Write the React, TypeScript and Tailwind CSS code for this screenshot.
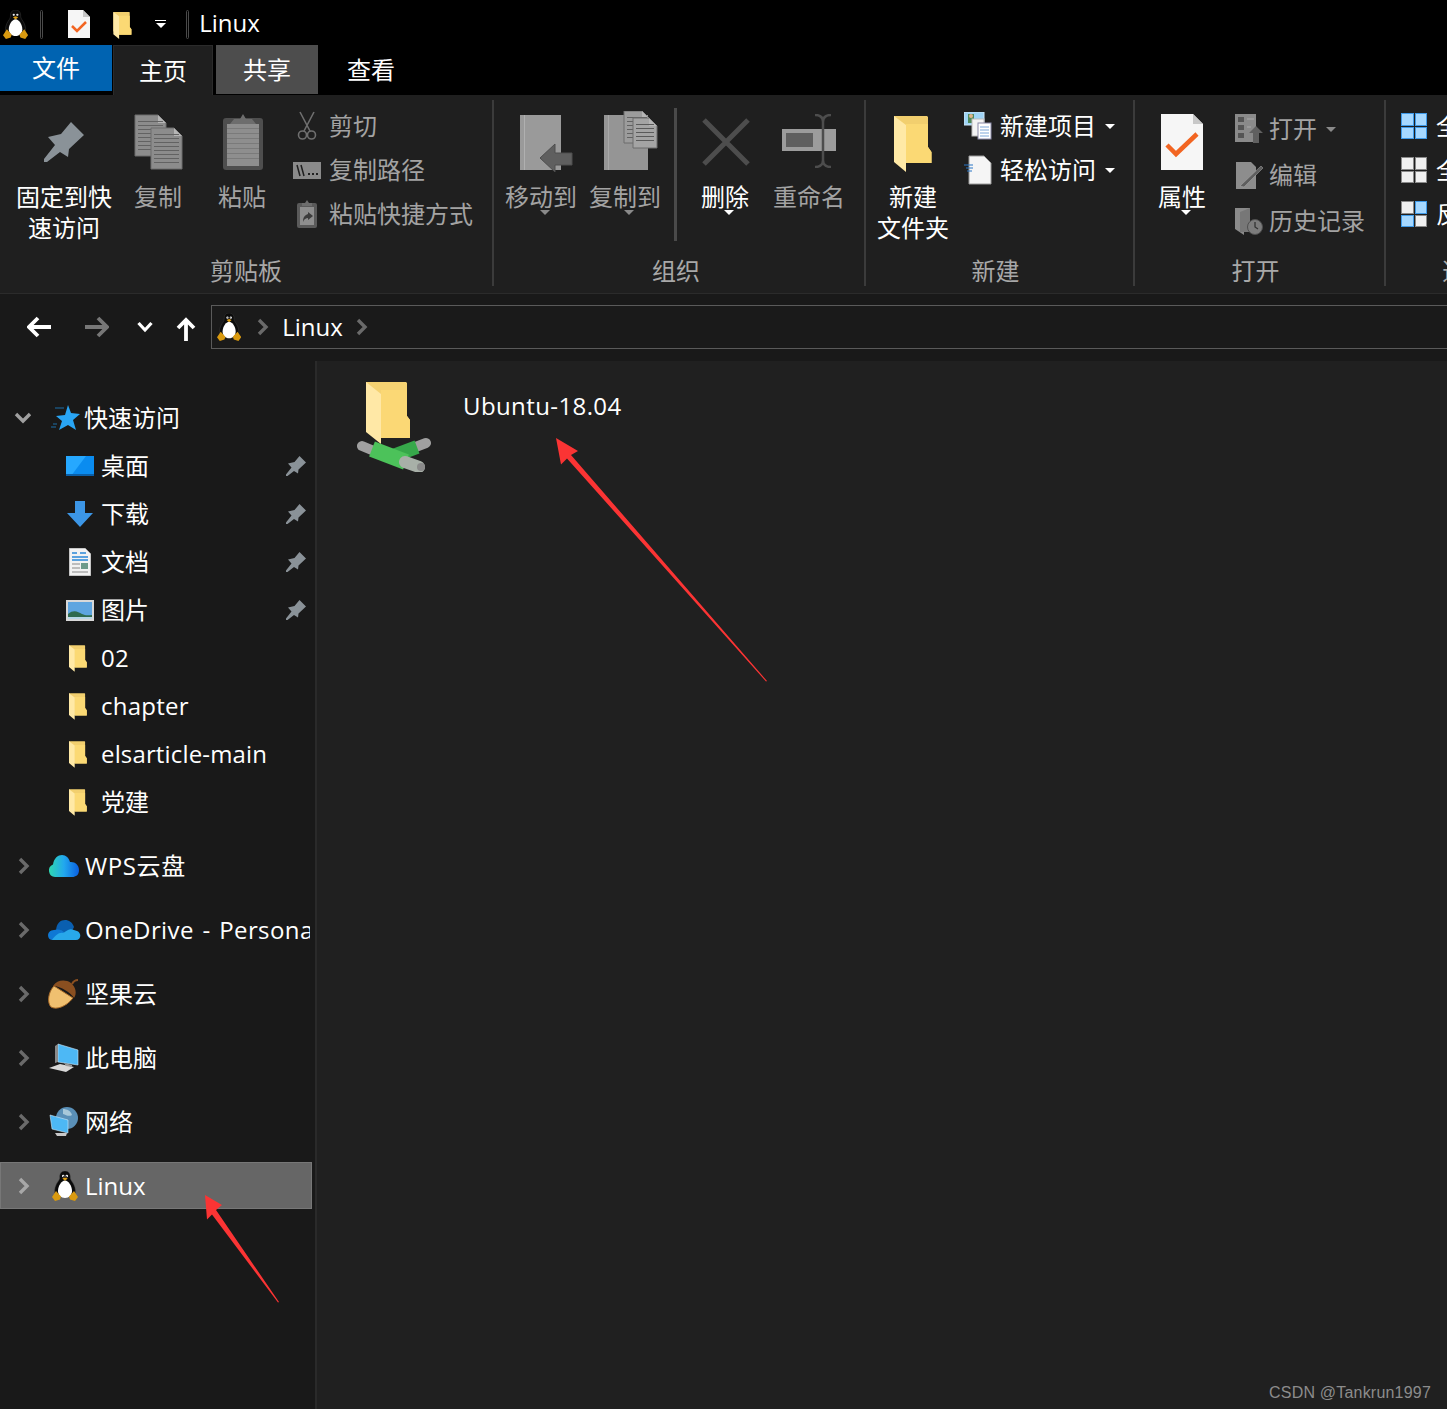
import type { ReactNode } from "react";

const Tux = ({ h = 30 }: { h?: number }) => (
  <svg width={(h * 26) / 30} height={h} viewBox="0 0 26 30">
    <path d="M13 0C9 0 7.500 3 7.700 6.500c.1 2.500-2.200 4-3.700 7.500-1.500 3.500-2 7-.5 10h19c1.500-3 1-6.500-.5-10-1.500-3.500-3.800-5-3.700-7.500C18.500 3 17 0 13 0z" fill="#0b0b0b" stroke="#4a4a4a" strokeWidth="0.4" />
    <path d="M13 9.500c-3.500 0-7 5.500-7 10.500 0 4 3 7 7 7s7-3 7-7c0-5-3.500-10.500-7-10.500z" fill="#fff" />
    <circle cx="11.200" cy="5" r="1.200" fill="#fff" />
    <circle cx="14.800" cy="5" r="1.200" fill="#fff" />
    <circle cx="11.500" cy="5.200" r="0.500" fill="#000" />
    <circle cx="14.500" cy="5.200" r="0.500" fill="#000" />
    <path d="M10.300 7.500 13 6.500l2.700 1L13 9.800z" fill="#e0a015" />
    <path d="M0 26l4-6 5 5.500-1 3-5 1.500zM26 26l-4-6-5 5.500 1 3 5 1.500z" fill="#d99a10" />
  </svg>
);

const Folder = ({ w = 20, h = 28 }: { w?: number; h?: number }) => (
  <svg width={w} height={h} viewBox="0 0 38 56">
    <path d="M0 0h33l1 1v30l3.500 5v11H12L0 40z" fill="#f2cf6e" />
    <path d="M12 8h22v23l3.500 5v11H12z" fill="#fbd974" />
    <path d="M0 0l12 9v47L0 46z" fill="#ffe9a6" />
  </svg>
);

const Pin = ({ size = 40, fill = "#8a9298" }: { size?: number; fill?: string }) => (
  <svg width={size} height={size} viewBox="0 0 40 40">
    <path d="M0 40h3l13-10 8 5 1-8 15-14L27 0 17 12 4 15l7 8L0 37z" fill={fill} />
  </svg>
);

const PageLines = ({ x, y, w, h, fill = "#8c8c8c", line = "#626262" }: { x: number; y: number; w: number; h: number; fill?: string; line?: string }) => {
  const rows = Array.from({ length: Math.floor((h - 8) / 4) }, (_, i) => y + 6 + i * 4);
  return (
    <g>
      <path d={`M${x} ${y}h${w - 8}l8 8v${h - 8}h-${w}z`} fill={fill} stroke="#6d6d6d" />
      <path d={`M${x + w - 8} ${y}v8h8z`} fill="#b5b5b5" />
      {rows.map((r) => (
        <rect key={r} x={x + 3} y={r} width={w - 6} height="1" fill={line} />
      ))}
    </g>
  );
};

const CopyIcon = () => (
  <svg width="50" height="56" viewBox="0 0 50 56">
    <PageLines x={1} y={1} w={31} h={41} />
    <PageLines x={17} y={14} w={31} h={41} />
  </svg>
);

const PasteIcon = () => (
  <svg width="42" height="58" viewBox="0 0 42 58">
    <rect x="1" y="5" width="40" height="52" rx="3" fill="#4e4e4e" />
    <rect x="5" y="11" width="32" height="42" fill="#8e8e8e" />
    {[15, 20, 25, 30, 35, 40, 45].map((r) => (
      <rect key={r} x="5" y={r} width="32" height="1" fill="#7a7a7a" />
    ))}
    <path d="M8 11l4-5h6l3-5 3 5h6l4 5z" fill="#6d6d6d" />
  </svg>
);

const Scissors = () => (
  <svg width="20" height="30" viewBox="0 0 20 30" fill="none" stroke="#6f6f6f" strokeWidth="1.600">
    <path d="M3 1l10 19M17 1L7 20" />
    <circle cx="5.500" cy="24" r="4" />
    <circle cx="14.500" cy="24" r="4" />
  </svg>
);

const PathIcon = () => (
  <svg width="28" height="17" viewBox="0 0 28 17">
    <rect width="28" height="17" fill="#8a8a8a" />
    <path d="M4 3l3 11M8 3l3 11" stroke="#1f1f1f" strokeWidth="1.500" />
    <path d="M15 11h2v2h-2zM19 11h2v2h-2zM23 11h2v2h-2z" fill="#1f1f1f" />
  </svg>
);

const ShortcutIcon = () => (
  <svg width="20" height="28" viewBox="0 0 20 28">
    <rect x="0" y="3" width="20" height="25" rx="2" fill="#5a5a5a" />
    <rect x="3" y="7" width="14" height="18" fill="#8e8e8e" />
    <path d="M5 3h3l2-3 2 3h3v3H5z" fill="#6d6d6d" />
    <path d="M6 22c0-5 2-7 5-8v-2l5 4-5 4v-2c-2 0-4 1-5 4z" fill="#3c3c3c" />
  </svg>
);

const MoveIcon = () => (
  <svg width="54" height="58" viewBox="0 0 54 58">
    <path d="M0 1h41v55H0z" fill="#9a9a9a" />
    <rect x="4" y="1" width="1" height="55" fill="#b0b0b0" />
    <path d="M20 44l15-14v9h17v12H35v7z" fill="#5f5f5f" stroke="#4e4e4e" />
  </svg>
);

const CopyToIcon = () => (
  <svg width="54" height="60" viewBox="0 0 54 60">
    <path d="M0 4h44v55H0z" fill="#959595" />
    <rect x="4" y="4" width="1" height="55" fill="#a8a8a8" />
    <PageLines x={20} y={0} w={26} h={32} fill="#9c9c9c" />
    <PageLines x={29} y={7} w={24} h={30} fill="#a4a4a4" line="#5a5a5a" />
  </svg>
);

const DeleteIcon = () => (
  <svg width="48" height="48" viewBox="0 0 48 48">
    <path d="M2 2l44 44M46 2 2 46" stroke="#4d4d4d" strokeWidth="5" />
  </svg>
);

const RenameIcon = () => (
  <svg width="56" height="54" viewBox="0 0 56 54">
    <rect x="1" y="15" width="54" height="22" fill="#9c9c9c" />
    <rect x="5" y="19" width="27" height="14" fill="#5f5f5f" />
    <path d="M34 1c5 0 8 2 8 7v38c0 5 3 7 8 7M50 1c-5 0-8 2-8 7v38c0 5-3 7-8 7" fill="none" stroke="#4d4d4d" strokeWidth="2.500" />
  </svg>
);

const PropertiesIcon = () => (
  <svg width="42" height="56" viewBox="0 0 42 56">
    <path d="M0 0h32l10 10v46H0z" fill="#f6f6f6" />
    <path d="M32 0v10h10z" fill="#c8c8c8" />
    <path d="M6 31l9 9 21-20" fill="none" stroke="#f26522" strokeWidth="4.500" />
  </svg>
);

const NewItemIcon = () => (
  <svg width="28" height="28" viewBox="0 0 28 28">
    <rect x="0" y="0" width="20" height="13" fill="#9fd4f5" stroke="#cfe7f7" />
    <rect x="4" y="2" width="6" height="9" fill="#4f8a5b" />
    <circle cx="7" cy="4" r="2" fill="#e0b48a" />
    <rect x="8" y="7" width="12" height="17" fill="#f4f4f4" stroke="#bbb" />
    <rect x="14" y="11" width="13" height="16" fill="#fff" stroke="#8a8aa8" />
    <path d="M16 15h9M16 18h9M16 21h9M16 24h9" stroke="#7da7d8" />
  </svg>
);

const EasyAccessIcon = () => (
  <svg width="28" height="30" viewBox="0 0 28 30">
    <path d="M5 1h15l7 7v21H5z" fill="#f5f5f5" stroke="#9a9a9a" />
    <path d="M0 10h9M2 13h7M3 16h5" stroke="#2a76c6" strokeWidth="1.200" />
  </svg>
);

const OpenIcon = () => (
  <svg width="28" height="30" viewBox="0 0 28 30">
    <rect x="0" y="0" width="21" height="28" fill="#8a8a8a" />
    <path d="M3 3h6v5H3zM3 11h6v5H3zM3 19h6v5H3z" fill="#555" />
    <path d="M12 5h7M12 13h4" stroke="#aaa" />
    <path d="M14 19l7-7 7 7h-4v10h-6V19z" fill="#606060" />
  </svg>
);

const EditIcon = () => (
  <svg width="28" height="28" viewBox="0 0 28 28">
    <path d="M1 1h15l5 5v22H1z" fill="#8d8d8d" />
    <path d="M5 25 26 5l2 2L9 26z" fill="#5e5e5e" stroke="#aaa" strokeWidth="0.500" />
  </svg>
);

const HistoryIcon = () => (
  <svg width="28" height="28" viewBox="0 0 28 28">
    <path d="M0 1h15v13l-6 8v6L0 22z" fill="#8a8a8a" />
    <path d="M5 5l10-4v24H5z" fill="#777" />
    <circle cx="20" cy="20" r="7.500" fill="#7c7c7c" stroke="#4f4f4f" />
    <path d="M20 15v5l3 2" stroke="#333" strokeWidth="1.300" fill="none" />
  </svg>
);

const Tiles = ({ on }: { on: boolean[] }) => (
  <div className="grid grid-cols-2 gap-[1px] w-[26px] h-[26px]">
    {on.map((blue, i) => (
      <div
        key={i}
        className={blue ? "bg-[#a6d8ff] border border-[#3f9ae8]" : "bg-[#f0f0f0] border border-[#8a8a8a]"}
      />
    ))}
  </div>
);

const Caret = ({ gray }: { gray?: boolean }) => (
  <svg width="10" height="5" viewBox="0 0 10 5">
    <path d="M0 0h10L5 5z" fill={gray ? "#8a8a8a" : "#fff"} />
  </svg>
);

const Chevron = ({ down, fill = "#6a6a6a" }: { down?: boolean; fill?: string }) => (
  <svg width="16" height="18" viewBox="0 0 16 18" className={down ? "rotate-90" : ""}>
    <path d="M4 2l7 7-7 7" fill="none" stroke={fill} strokeWidth="3.400" />
  </svg>
);

const BigButton = ({
  icon,
  lines,
  dim,
  caret,
  className = "w-[84px]",
}: {
  icon: ReactNode;
  lines: string[];
  dim?: boolean;
  caret?: boolean;
  className?: string;
}) => (
  <div className={`flex flex-col items-center pt-[8px] shrink-0 ${className}`}>
    <div className="h-[73px] pt-[6px] flex items-start justify-center">{icon}</div>
    {lines.map((t) => (
      <span key={t} className={`leading-[31px] text-[24px] whitespace-nowrap ${dim ? "text-[#a3a3a3]" : "text-white"}`}>
        {t}
      </span>
    ))}
    {caret && (
      <span className="-mt-[2px] ml-[8px] flex">
        <Caret gray={dim} />
      </span>
    )}
  </div>
);

const SmallButton = ({
  icon,
  label,
  dim,
  caret,
  iconBox,
  height,
}: {
  icon: ReactNode;
  label: string;
  dim?: boolean;
  caret?: "white" | "gray";
  iconBox: string;
  height: string;
}) => (
  <div className={`flex items-center ${height}`}>
    <div className={`flex items-center justify-center shrink-0 ${iconBox}`}>{icon}</div>
    <span className={`text-[24px] whitespace-nowrap ${dim ? "text-[#a3a3a3]" : "text-white"}`}>{label}</span>
    {caret && (
      <span className="ml-[9px] flex">
        <Caret gray={caret === "gray"} />
      </span>
    )}
  </div>
);

const Group = ({
  width,
  label,
  labelClass = "",
  border = true,
  children,
}: {
  width: string;
  label: string;
  labelClass?: string;
  border?: boolean;
  children: ReactNode;
}) => (
  <div className={`flex flex-col h-[186px] shrink-0 ${width} ${border ? "border-r-2 border-[#3b3b3b]" : ""}`}>
    <div className="flex h-[155px]">{children}</div>
    <div className={`h-[31px] flex items-center justify-center text-[24px] text-[#a8a8a8] whitespace-nowrap ${labelClass}`}>{label}</div>
  </div>
);

const Ribbon = () => (
  <div className="h-[199px] bg-[#1f1f1f] border-b border-[#2b2b2b] pt-[5px] flex overflow-hidden">
    <Group width="w-[494px]" label="剪贴板">
      <BigButton className="w-[128px]" icon={<div className="pt-[8px]"><Pin /></div>} lines={["固定到快", "速访问"]} />
      <BigButton className="w-[60px]" dim icon={<div className="pl-[2px]"><CopyIcon /></div>} lines={["复制"]} />
      <BigButton className="w-[100px] ml-[4px]" dim icon={<div className="-mt-[1px] pl-[1px]"><PasteIcon /></div>} lines={["粘贴"]} />
      <div className="flex flex-col pt-[4px]">
        <SmallButton dim height="h-[44px]" iconBox="w-[30px] mr-[7px]" icon={<Scissors />} label="剪切" />
        <SmallButton dim height="h-[44px]" iconBox="w-[30px] mr-[7px]" icon={<PathIcon />} label="复制路径" />
        <SmallButton dim height="h-[44px]" iconBox="w-[30px] mr-[7px]" icon={<ShortcutIcon />} label="粘贴快捷方式" />
      </div>
    </Group>
    <Group width="w-[372px]" label="组织" labelClass="pr-[6px]">
      <BigButton className="w-[84px] ml-[5px]" dim caret icon={<div className="pl-[12px]"><MoveIcon /></div>} lines={["移动到"]} />
      <BigButton dim caret icon={<div className="pl-[12px] -mt-[3px]"><CopyToIcon /></div>} lines={["复制到"]} />
      <div className="w-[16px] flex justify-center pt-[8px] shrink-0">
        <div className="w-[3px] h-[133px] bg-[#4a4a4a]" />
      </div>
      <BigButton caret icon={<div className="pt-[4px] pl-[2px]"><DeleteIcon /></div>} lines={["删除"]} />
      <BigButton dim icon={<RenameIcon />} lines={["重命名"]} />
    </Group>
    <Group width="w-[269px]" label="新建" labelClass="pr-[8px]">
      <BigButton className="w-[84px] ml-[5px]" icon={<div className="pt-[2px]"><Folder w={38} h={56} /></div>} lines={["新建", "文件夹"]} />
      <div className="flex flex-col pt-[4px]">
        <SmallButton height="h-[44px]" iconBox="w-[45px]" icon={<NewItemIcon />} label="新建项目" caret="white" />
        <SmallButton height="h-[44px]" iconBox="w-[45px]" icon={<EasyAccessIcon />} label="轻松访问" caret="white" />
      </div>
    </Group>
    <Group width="w-[251px]" label="打开" labelClass="pr-[8px]">
      <BigButton className="w-[84px] ml-[5px]" caret icon={<PropertiesIcon />} lines={["属性"]} />
      <div className="flex flex-col pt-[6px]">
        <SmallButton dim height="h-[46px]" iconBox="w-[45px] pl-[5px]" icon={<OpenIcon />} label="打开" caret="gray" />
        <SmallButton dim height="h-[46px]" iconBox="w-[45px] pl-[5px]" icon={<EditIcon />} label="编辑" />
        <SmallButton dim height="h-[46px]" iconBox="w-[45px] pl-[5px]" icon={<HistoryIcon />} label="历史记录" />
      </div>
    </Group>
    <Group width="w-[160px]" label="选择" border={false}>
      <div className="flex flex-col pt-[4px] pl-[15px]">
        <SmallButton height="h-[44px]" iconBox="w-[35px] justify-start" icon={<Tiles on={[true, true, true, true]} />} label="全部选择" />
        <SmallButton height="h-[44px]" iconBox="w-[35px] justify-start" icon={<Tiles on={[false, false, false, false]} />} label="全部取消" />
        <SmallButton height="h-[44px]" iconBox="w-[35px] justify-start" icon={<Tiles on={[false, true, true, false]} />} label="反向选择" />
      </div>
    </Group>
  </div>
);

const TitleBar = () => (
  <div className="h-[45px] bg-black flex items-center pt-[3px]">
    <div className="ml-[3px]"><Tux h={29} /></div>
    <div className="ml-[12px] w-[3px] h-[29px] rounded-sm border border-[#4a4a4a]" />
    <div className="ml-[25px]">
      <svg width="22" height="28" viewBox="0 0 22 28">
        <path d="M0 0h15l7 7v21H0z" fill="#f6f6f6" />
        <path d="M15 0v7h7z" fill="#c8c8c8" />
        <path d="M4 16l5 5 9-9" fill="none" stroke="#f26522" strokeWidth="2.500" />
      </svg>
    </div>
    <div className="ml-[23px] pt-[3px]"><Folder w={19} h={27} /></div>
    <div className="ml-[23px] flex flex-col items-center gap-[2px]">
      <div className="w-[11px] h-[1px] bg-white" />
      <Caret />
    </div>
    <div className="ml-[20px] w-[3px] h-[29px] rounded-sm border border-[#4a4a4a]" />
    <span className="ml-[10px] -mt-[2px] text-[24px] text-white leading-none">Linux</span>
  </div>
);

const Tabs = () => (
  <div className="h-[50px] bg-black flex text-[24px] text-white">
    <div className="w-[112px] h-[46px] bg-[#0063b1] flex items-center justify-center">文件</div>
    <div className="ml-[1px] w-[100px] h-[50px] bg-[#1f1f1f] border-x border-t border-[#2b2b2b] flex items-center justify-center">主页</div>
    <div className="ml-[3px] w-[102px] h-[49px] bg-[#4d4d4d] flex items-center justify-center">共享</div>
    <div className="w-[106px] h-[49px] flex items-center justify-center">查看</div>
  </div>
);

const NavBar = () => (
  <div className="h-[67px] bg-[#191919] flex pt-[11px]">
    <div className="w-[211px] h-[44px] flex items-center shrink-0 pl-[27px]">
      <svg width="24" height="22" viewBox="0 0 24 22"><path d="M11 2 2 11l9 9M2 11h22" fill="none" stroke="#fff" strokeWidth="3.800" /></svg>
      <svg className="ml-[34px]" width="24" height="22" viewBox="0 0 24 22"><path d="M13 2l9 9-9 9M22 11H0" fill="none" stroke="#777" strokeWidth="3.800" /></svg>
      <svg className="ml-[28px]" width="16" height="12" viewBox="0 0 16 12"><path d="M1.500 2 8 9l6.500-7" fill="none" stroke="#fff" strokeWidth="3.200" /></svg>
      <svg className="ml-[23px] mt-[3px]" width="20" height="24" viewBox="0 0 20 24"><path d="M2 11l8-8 8 8M10 3v21" fill="none" stroke="#fff" strokeWidth="3.800" /></svg>
    </div>
    <div className="flex-1 h-[44px] bg-[#1a1a1a] border border-[#5a5a5a] border-r-0 flex items-center pl-[5px]">
      <Tux h={28} />
      <span className="ml-[14px] flex"><Chevron /></span>
      <span className="ml-[11px] text-[24px] text-white leading-none">Linux</span>
      <span className="ml-[11px] flex"><Chevron /></span>
    </div>
  </div>
);

const DesktopIcon = () => (
  <svg width="28" height="20" viewBox="0 0 28 20">
    <rect width="28" height="20" fill="#0a8cf0" />
    <path d="M0 0h20L5 20H0z" fill="#26a8ff" />
    <rect y="18" width="28" height="2" fill="#0a5fa8" />
  </svg>
);
const DownloadIcon = () => (
  <svg width="26" height="26" viewBox="0 0 26 26">
    <path d="M8 0h10v12h8L13 26 0 12h8z" fill="#3c96e6" />
  </svg>
);
const DocsIcon = () => (
  <svg width="22" height="28" viewBox="0 0 22 28">
    <path d="M0 0h16l6 6v22H0z" fill="#f2f2f2" stroke="#999" />
    <path d="M3 5h5M11 5h6M3 9h16M3 12h16" stroke="#2a88d8" strokeWidth="1.300" />
    <path d="M3 16h8M3 20h8M3 24h16" stroke="#888" />
    <rect x="12" y="15" width="7" height="6" fill="#6d9a8a" />
  </svg>
);
const PicturesIcon = () => (
  <svg width="28" height="21" viewBox="0 0 28 21">
    <rect width="28" height="21" fill="#d8d8d8" />
    <rect x="2" y="2" width="24" height="17" fill="#5ea5e0" />
    <path d="M2 14c6-5 10-2 14 0s7 1 10 1v4H2z" fill="#2f6b4f" />
    <rect x="2" y="17" width="24" height="2" fill="#b8d8e8" />
  </svg>
);

const StarIcon = () => (
  <svg width="30" height="26" viewBox="0 0 30 26">
    <path d="M17 0l3 8 9 1-7 6 3 10-8-5-9 5 3-9-6-5 9-1z" fill="#29a5f5" />
    <path d="M4 3h9M0 22h5M2 19h4" stroke="#1c6fa8" strokeWidth="1" />
  </svg>
);
const WpsIcon = () => (
  <svg width="32" height="24" viewBox="0 0 32 24">
    <defs>
      <linearGradient id="wps" x1="0" x2="1" y1="0" y2="0">
        <stop offset="0" stopColor="#2fd8b0" />
        <stop offset="0.5" stopColor="#22a8ee" />
        <stop offset="1" stopColor="#0a5fe0" />
      </linearGradient>
    </defs>
    <path d="M7 23A6.500 6.500 0 0 1 5 10.500C6 4 10 1 14 1c4 0 7 3 8 7 5-.5 9 3 9 8s-3 7-7 7z" fill="url(#wps)" />
  </svg>
);
const OneDriveIcon = () => (
  <svg width="34" height="22" viewBox="0 0 34 22">
    <path d="M9 12C9 4 14 1 18 1c4 0 7 2 9 7l-3 6z" fill="#0a5fb0" />
    <path d="M5 21c-6-1-5-10 2-10 3-1 8-1 11 3l-6 7z" fill="#0f78d4" />
    <path d="M5 21h24c5 0 6-7 1-9-3-1-6-3-9-1l-5 3c-4-1-8 3-11 7z" fill="#28a8ea" />
  </svg>
);
const AcornIcon = () => (
  <svg width="32" height="30" viewBox="0 0 32 30">
    <path d="M6 7C0 13-1 24 3 28c5 3 15 0 22-9z" fill="#f0c070" stroke="#a86a28" />
    <path d="M5 7c4-6 12-7 18-3 5 4 6 11 3 15-3-5-13-12-21-12z" fill="#8a4f20" />
    <path d="M24 5c1-2 3-4 6-4" fill="none" stroke="#8a4f20" strokeWidth="2" />
  </svg>
);
const PcIcon = () => (
  <svg width="32" height="30" viewBox="0 0 32 30">
    <path d="M10 1l20 6v15l-20-3z" fill="#4db8f5" stroke="#cfe9fa" strokeWidth="0.600" />
    <path d="M10 1v18l-3 1V3z" fill="#8a8a8a" />
    <path d="M1 25l11-4 14 3-8 5z" fill="#d8d8d8" />
    <path d="M16 20l8 2v2l-6-1z" fill="#9a9a9a" />
  </svg>
);
const NetworkIcon = () => (
  <svg width="30" height="30" viewBox="0 0 30 30">
    <circle cx="18" cy="11" r="11" fill="#5a90b8" />
    <path d="M14 2c4 0 8 2 9 6-3 2-6 0-9-1z" fill="#a8c8da" />
    <path d="M1 8l18 5v13L3 22z" fill="#4db8f5" stroke="#cfe9fa" strokeWidth="0.600" />
    <path d="M6 26l12 0-1 3H8z" fill="#c8c8c8" />
  </svg>
);

const QUICK_ITEMS: { label: string; icon: ReactNode; pinned?: boolean; textClass?: string }[] = [
  { label: "桌面", icon: <DesktopIcon />, pinned: true },
  { label: "下载", icon: <DownloadIcon />, pinned: true },
  { label: "文档", icon: <DocsIcon />, pinned: true },
  { label: "图片", icon: <PicturesIcon />, pinned: true },
  { label: "02", icon: <div className="pr-[4px]"><Folder w={18} h={27} /></div>, textClass: "tracking-[0.4px]" },
  { label: "chapter", icon: <div className="pr-[4px]"><Folder w={18} h={27} /></div>, textClass: "tracking-[0.25px]" },
  { label: "elsarticle-main", icon: <div className="pr-[4px]"><Folder w={18} h={27} /></div>, textClass: "tracking-[0.15px]" },
  { label: "党建", icon: <div className="pr-[4px]"><Folder w={18} h={27} /></div> },
];

const ROOT_ITEMS: { label: string; icon: ReactNode; selected?: boolean; textClass?: string }[] = [
  { label: "WPS云盘", icon: <WpsIcon />, textClass: "tracking-[0.6px]" },
  { label: "OneDrive - Personal", icon: <OneDriveIcon />, textClass: "tracking-[0.4px] [word-spacing:2px]" },
  { label: "坚果云", icon: <AcornIcon /> },
  { label: "此电脑", icon: <PcIcon /> },
  { label: "网络", icon: <NetworkIcon /> },
  { label: "Linux", icon: <Tux />, selected: true },
];

const Sidebar = () => (
  <div className="w-[315px] shrink-0 bg-[#191919] pt-[33px] text-[24px] text-white overflow-hidden">
    <div className="h-12 flex items-center">
      <span className="w-[47px] pl-[15px] flex"><Chevron down fill="#a0a0a0" /></span>
      <span className="w-[38px] flex justify-center"><StarIcon /></span>
      <span className="-ml-[1px]">快速访问</span>
    </div>
    {QUICK_ITEMS.map((item) => (
      <div key={item.label} className="h-12 flex items-center">
        <span className="w-[66px] shrink-0" />
        <span className="w-[28px] flex justify-center">{item.icon}</span>
        <span className={`ml-[7px] flex-1 whitespace-nowrap ${item.textClass ?? ""}`}>{item.label}</span>
        {item.pinned && (
          <span className="w-[29px] flex">
            <Pin size={20} />
          </span>
        )}
      </div>
    ))}
    <div className="h-[16px]" />
    {ROOT_ITEMS.map((item) => (
      <div
        key={item.label}
        className={`w-[312px] flex items-center overflow-hidden ${
          item.selected ? "h-[47px] bg-[#666666] border border-[#777777]" : "h-12 mb-4"
        }`}
      >
        <span className={`w-[47px] shrink-0 flex ${item.selected ? "pl-[15px]" : "pl-[16px]"}`}>
          <Chevron fill={item.selected ? "#a8a8a8" : "#6a6a6a"} />
        </span>
        <span className={`shrink-0 flex justify-center ${item.selected ? "w-[33px]" : "w-[34px]"}`}>{item.icon}</span>
        <span className={`ml-[4px] w-[225px] overflow-hidden whitespace-nowrap ${item.textClass ?? ""}`}>{item.label}</span>
      </div>
    ))}
  </div>
);

const ShareFolderIcon = () => (
  <svg width="74" height="90" viewBox="0 0 74 90">
    <path d="M9 0h40l1 1v33l3 4v18H24L9 46z" fill="#f5d272" />
    <path d="M24 8h26v26l3 4v18H24z" fill="#fbd875" />
    <path d="M9 0l15 12v50L9 50z" fill="#ffe8a6" />
    <path d="M56 66l13-5" stroke="#a0a0a0" strokeWidth="10" strokeLinecap="round" />
    <path d="M36 74l24-9" stroke="#36a84a" strokeWidth="14" />
    <path d="M5 64l12 5" stroke="#a0a0a0" strokeWidth="10" strokeLinecap="round" />
    <path d="M15 67l34 13" stroke="#4cc25a" strokeWidth="16" />
    <path d="M48 80l14 5" stroke="#a8b0a8" strokeWidth="12" strokeLinecap="round" />
    <circle cx="64" cy="85" r="4" fill="#8a8a8a" />
  </svg>
);

const Arrow = ({ d }: { d: string }) => <path d={d} fill="#fb3434" />;

export default function App() {
  return (
    <div className="relative w-[1447px] h-[1409px] overflow-hidden bg-[#202020] font-['Open_Sans','Noto_Sans_CJK_SC',sans-serif]">
      <TitleBar />
      <Tabs />
      <Ribbon />
      <NavBar />
      <div className="flex h-[1048px]">
        <Sidebar />
        <div className="w-[2px] bg-[#2a2a2a] shrink-0" />
        <div className="flex-1 bg-[#202020] flex items-start pl-[40px] pt-[21px]">
          <ShareFolderIcon />
          <span className="ml-[32px] text-[24px] text-white leading-[48px] tracking-[0.4px]">Ubuntu-18.04</span>
        </div>
      </div>

      {/* red annotations sit on top of the window */}
      <svg className="absolute left-0 top-0 pointer-events-none" width="1447" height="1409" viewBox="0 0 1447 1409">
        <Arrow d="M556 438l22 13-7 4 196 226-1 .5-199-223-6 6z" />
        <Arrow d="M205 1195l17 10-6 5 63 92-1 .5-66-88-5 5z" />
      </svg>

      <span className="absolute right-[16px] bottom-[4px] text-[16px] tracking-[0.2px] text-[#8c8c8c] font-['Liberation_Sans',sans-serif]">
        CSDN @Tankrun1997
      </span>
    </div>
  );
}
